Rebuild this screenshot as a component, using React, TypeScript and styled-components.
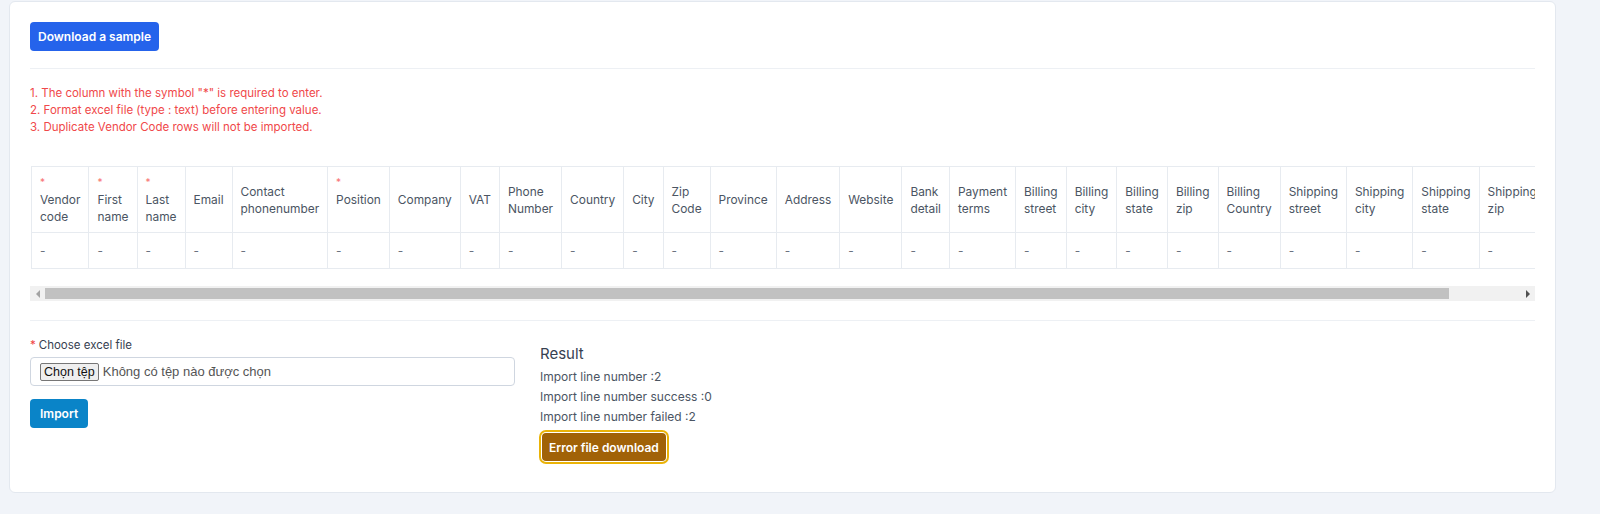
import styled, { createGlobalStyle } from "styled-components";

const GlobalStyle = createGlobalStyle`
  html, body {
    margin: 0;
    padding: 0;
    overflow: hidden;
    background: #f1f4f9;
    font-family: Inter, "Noto Sans", "Liberation Sans", sans-serif;
  }
  * { box-sizing: border-box; }
`;

const Page = styled.div`
  width: 100%;
  padding: 1px 44px 22px 9px;
`;

const Card = styled.div`
  background: #fff;
  border: 1px solid #e3e8ef;
  border-radius: 6px;
  padding: 20px 20px 29px 20px;
  min-width: 0;
`;

const Button = styled.button<{ $tone: "blue" | "sky" | "amber" }>`
  border: none;
  border-radius: 4px;
  color: #fff;
  font-family: Inter, "Liberation Sans", sans-serif;
  font-size: 12px;
  font-weight: 600;
  height: 29px;
  padding: 0 ${(p) => (p.$tone === "sky" ? 10 : 8)}px;
  cursor: pointer;
  background: ${(p) =>
    p.$tone === "blue" ? "#2563eb" : p.$tone === "sky" ? "#0a84c8" : "#a16207"};
  ${(p) =>
    p.$tone === "amber" &&
    `
    height: 28px;
    padding: 0 7px;
    margin: 2px;
    box-shadow: 0 0 0 1px #fff, 0 0 0 3px #eab308;
  `}
`;

const Divider = styled.hr`
  border: none;
  border-top: 1px solid #edf0f4;
  margin: 19px 0 0 0;
`;

const TopDivider = styled(Divider)`
  margin: 17px 0 0 0;
`;

const Notes = styled.div`
  color: #f0484a;
  font-size: 11.5px;
  line-height: 17px;
  padding: 16px 0 30px 0;
`;

const TableViewport = styled.div`
  overflow: hidden;
`;

const Table = styled.table`
  border-collapse: collapse;
  font-size: 11.9px;
  line-height: 17px;
  margin-left: 1px;
`;

const HeadCell = styled.th<{ $required?: boolean }>`
  border: 1px solid #e7ebf0;
  padding: 7px 8px;
  font-weight: 400;
  color: #4b5563;
  text-align: left;
  vertical-align: ${(p) => (p.$required ? "top" : "middle")};
`;

const Star = styled.span`
  display: block;
  color: #f87171;
  font-size: 10px;
`;

const BodyCell = styled.td`
  border: 1px solid #e7ebf0;
  padding: 9px 8px;
  color: #6b7280;
`;

/* horizontal scrollbar under the table */
const ScrollBar = styled.div`
  display: flex;
  height: 15px;
  margin-top: 17px;
  background: #f1f1f1;
`;

const ScrollArrow = styled.span<{ $dir: "left" | "right" }>`
  flex: 0 0 15px;
  display: flex;
  align-items: center;
  justify-content: center;
  &::after {
    content: "";
    width: 0;
    height: 0;
    border-top: 4px solid transparent;
    border-bottom: 4px solid transparent;
    ${(p) =>
      p.$dir === "left"
        ? "border-right: 4px solid #a3a3a3;"
        : "border-left: 4px solid #505050;"}
  }
`;

const ScrollTrack = styled.div`
  flex: 1;
  padding: 2px 0;
  display: flex;
`;

const ScrollThumb = styled.div`
  background: #c1c1c1;
`;

const FormRow = styled.div`
  display: grid;
  grid-template-columns: 485px 1fr;
  gap: 25px;
  padding-top: 16px;
`;

const Label = styled.div`
  font-size: 11.5px;
  color: #374151;
  line-height: 16px;
  margin-bottom: 4px;
`;

const RedMark = styled.span`
  color: #ef4444;
  margin-right: 3px;
`;

const FileBox = styled.label`
  display: flex;
  align-items: center;
  height: 29px;
  border: 1px solid #cfd6e0;
  border-radius: 4px;
  padding: 0 9px;
  gap: 4px;
  margin-bottom: 13px;
  cursor: pointer;
  input { display: none; }
`;

const FileButton = styled.span`
  font-family: "Liberation Sans", Arial, sans-serif;
  font-size: 12.5px;
  color: #111;
  background: #efefef;
  border: 1px solid #767676;
  border-radius: 2px;
  padding: 0 3px;
  line-height: 16px;
`;

const FileName = styled.span`
  font-family: "Liberation Sans", Arial, sans-serif;
  font-size: 13px;
  color: #555;
`;

const ResultCol = styled.div`
  padding-top: 8px;
`;

const ResultTitle = styled.div`
  font-size: 15px;
  color: #374151;
  line-height: 18px;
  margin-bottom: 4px;
`;

const ResultLine = styled.div`
  font-size: 12px;
  color: #4b5563;
  line-height: 20px;
`;

const ErrorWrap = styled.div`
  margin-top: 4px;
`;

const columns: { label: string; required?: boolean }[] = [
  { label: "Vendor code", required: true },
  { label: "First name", required: true },
  { label: "Last name", required: true },
  { label: "Email" },
  { label: "Contact phonenumber" },
  { label: "Position", required: true },
  { label: "Company" },
  { label: "VAT" },
  { label: "Phone Number" },
  { label: "Country" },
  { label: "City" },
  { label: "Zip Code" },
  { label: "Province" },
  { label: "Address" },
  { label: "Website" },
  { label: "Bank detail" },
  { label: "Payment terms" },
  { label: "Billing street" },
  { label: "Billing city" },
  { label: "Billing state" },
  { label: "Billing zip" },
  { label: "Billing Country" },
  { label: "Shipping street" },
  { label: "Shipping city" },
  { label: "Shipping state" },
  { label: "Shipping zip" },
];

export default function App() {
  return (
    <>
      <GlobalStyle />
      <Page>
        <Card>
          <Button $tone="blue">Download a sample</Button>
          <TopDivider />
          <Notes>
            <div>1. The column with the symbol "*" is required to enter.</div>
            <div>2. Format excel file (type : text) before entering value.</div>
            <div>3. Duplicate Vendor Code rows will not be imported.</div>
          </Notes>

          <TableViewport>
            <Table>
              <thead>
                <tr>
                  {columns.map((c) => (
                    <HeadCell key={c.label} $required={c.required}>
                      {c.required && <Star>*</Star>}
                      {c.label}
                    </HeadCell>
                  ))}
                </tr>
              </thead>
              <tbody>
                <tr>
                  {columns.map((c) => (
                    <BodyCell key={c.label}>-</BodyCell>
                  ))}
                </tr>
              </tbody>
            </Table>
          </TableViewport>
          <ScrollBar>
            <ScrollArrow $dir="left" />
            <ScrollTrack>
              <ScrollThumb style={{ width: "95.2%" }} />
            </ScrollTrack>
            <ScrollArrow $dir="right" />
          </ScrollBar>
          <Divider />

          <FormRow>
            <div>
              <Label>
                <RedMark>*</RedMark>Choose excel file
              </Label>
              <FileBox>
                <input type="file" />
                <FileButton>Chọn tệp</FileButton>
                <FileName>Không có tệp nào được chọn</FileName>
              </FileBox>
              <Button $tone="sky">Import</Button>
            </div>
            <ResultCol>
              <ResultTitle>Result</ResultTitle>
              <ResultLine>Import line number :2</ResultLine>
              <ResultLine>Import line number success :0</ResultLine>
              <ResultLine>Import line number failed :2</ResultLine>
              <ErrorWrap>
                <Button $tone="amber">Error file download</Button>
              </ErrorWrap>
            </ResultCol>
          </FormRow>
        </Card>
      </Page>
    </>
  );
}
